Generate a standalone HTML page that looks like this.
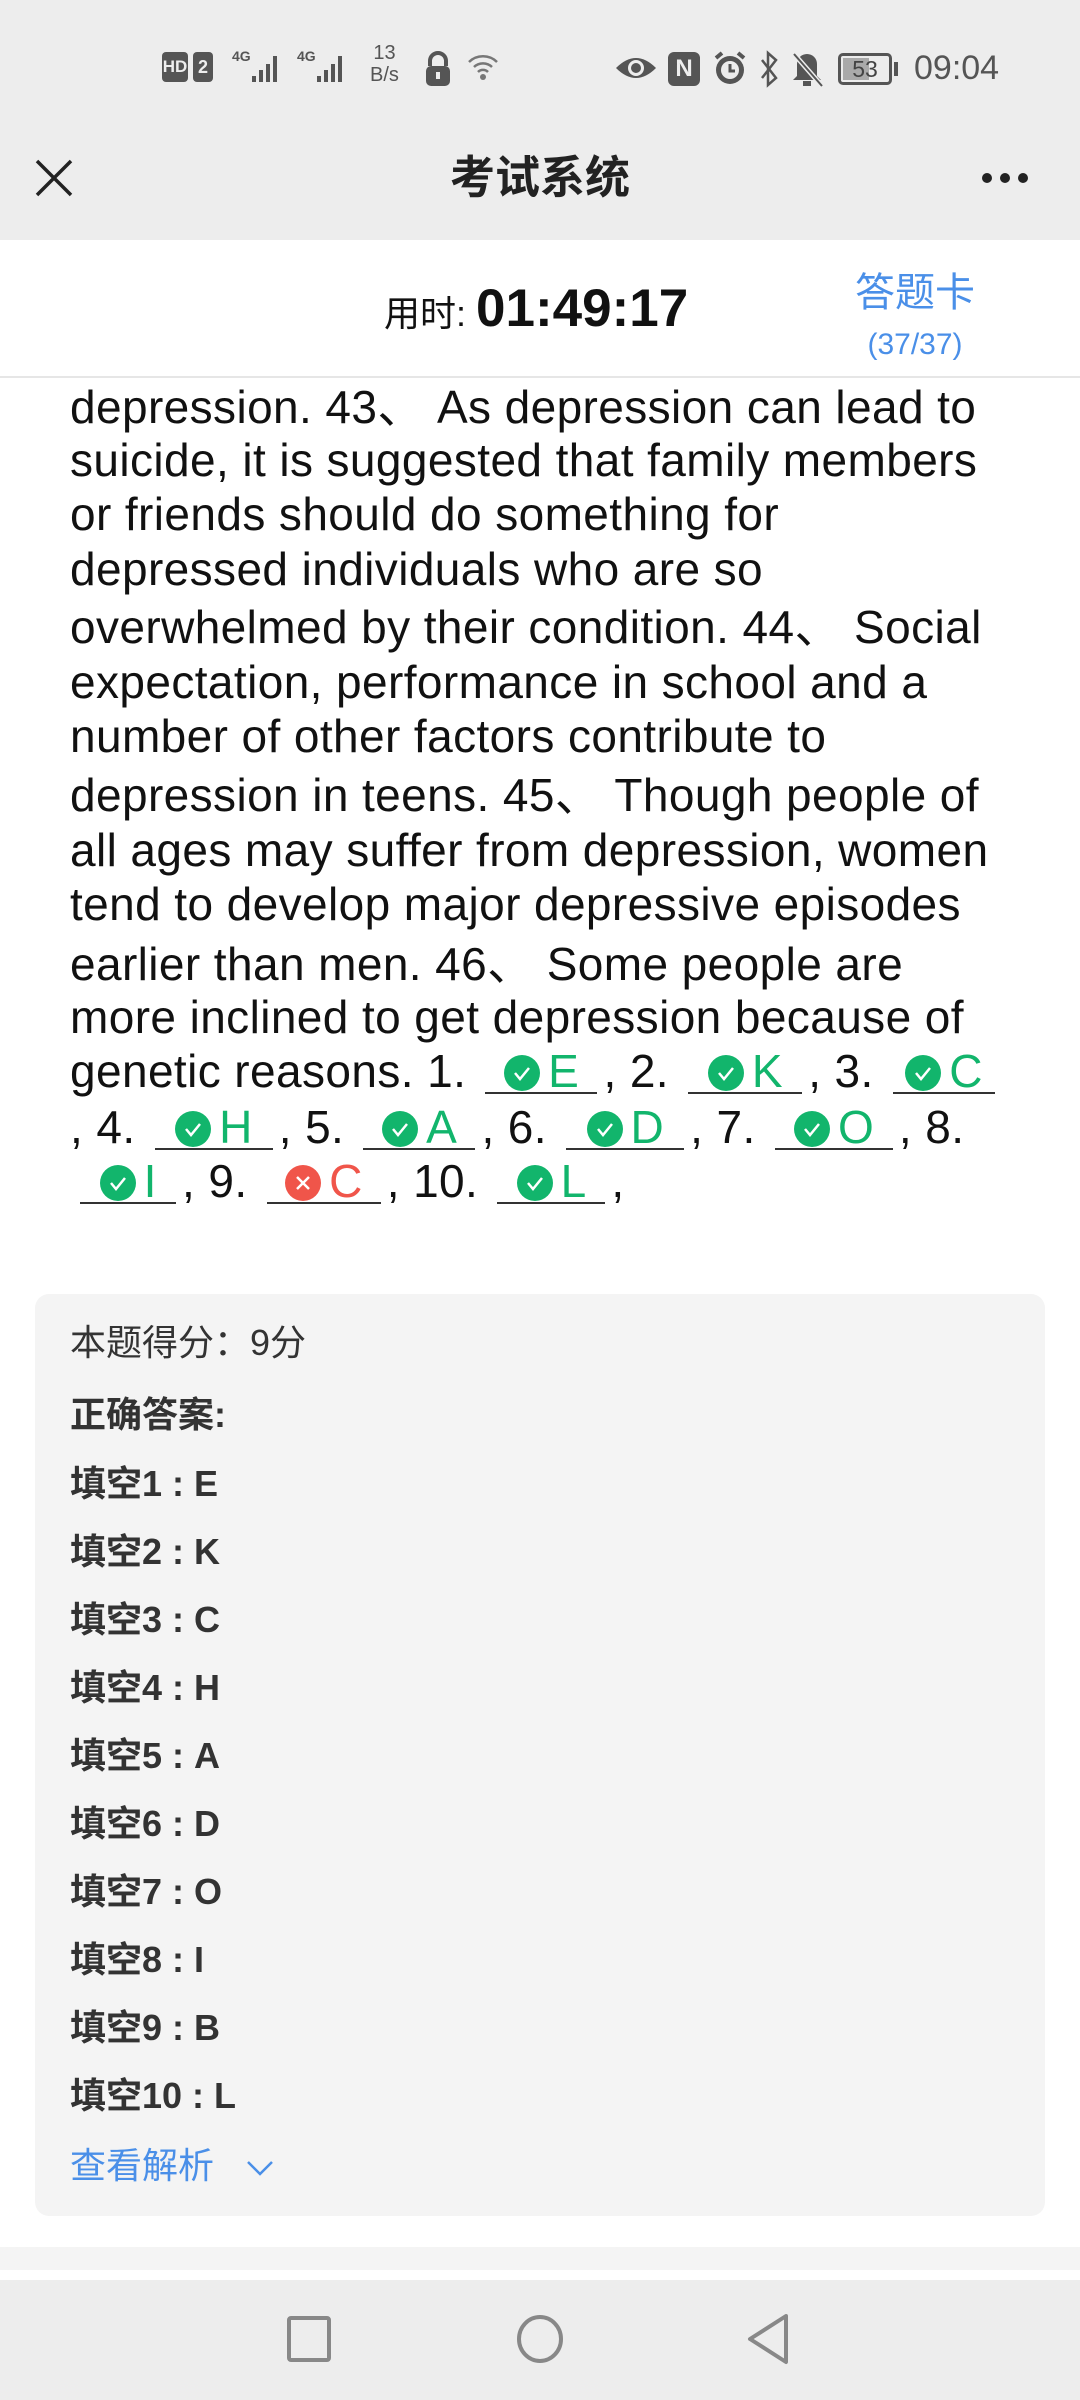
<!DOCTYPE html>
<html><head><meta charset="utf-8">
<style>
*{margin:0;padding:0;box-sizing:border-box}
body{width:1080px;height:2400px;position:relative;background:#fff;font-family:"Liberation Sans","Noto Sans CJK SC",sans-serif;overflow:hidden;color:#111}
.abs{position:absolute}
#top{left:0;top:0;width:1080px;height:240px;background:#ededed}
.hdr{left:0;top:240px;width:1080px;height:138px;background:#fff;border-bottom:2px solid #e6e6e6}
.ln{position:absolute;left:70px;font-size:46px;letter-spacing:0.4px;line-height:54px;white-space:nowrap;color:#111}
.b{display:inline-block;border-bottom:2px solid #333;text-align:center;height:50px;vertical-align:top;margin:0 6px;letter-spacing:0}
.ck{display:inline-block;width:36px;height:36px;border-radius:50%;background:#12b56c;vertical-align:-4px;position:relative;margin-right:8px}
.ck svg{position:absolute;left:0;top:0}
.g{color:#12b56c}.r{color:#f0554a}
.x{background:#f0554a}
.box{left:35px;top:1294px;width:1010px;height:922px;background:#f4f4f4;border-radius:14px}
.bl{position:absolute;left:70px;font-size:36px;color:#333;line-height:44px}
.bb{font-weight:bold}
</style></head><body>
<div id="top" class="abs"></div>
<!-- status bar -->
<div class="abs" style="left:162px;top:52px;width:26px;height:30px;background:#555;border-radius:4px;color:#eee;font-size:17px;font-weight:bold;line-height:30px;text-align:center">HD</div>
<div class="abs" style="left:193px;top:52px;width:20px;height:30px;background:#555;border-radius:4px;color:#eee;font-size:18px;font-weight:bold;line-height:30px;text-align:center">2</div>
<div class="abs" style="left:232px;top:48px;font-size:14px;font-weight:bold;color:#555">4G</div>
<svg class="abs" style="left:250px;top:52px" width="36" height="32"><g fill="#555"><rect x="2" y="24" width="4" height="6"/><rect x="9" y="18" width="4" height="12"/><rect x="16" y="12" width="4" height="18"/><rect x="23" y="4" width="4" height="26"/></g></svg>
<div class="abs" style="left:297px;top:48px;font-size:14px;font-weight:bold;color:#555">4G</div>
<svg class="abs" style="left:315px;top:52px" width="36" height="32"><g fill="#555"><rect x="2" y="24" width="4" height="6"/><rect x="9" y="18" width="4" height="12"/><rect x="16" y="12" width="4" height="18"/><rect x="23" y="4" width="4" height="26"/></g></svg>
<div class="abs" style="left:370px;top:42px;font-size:20px;color:#555;line-height:22px;text-align:center">13<br>B/s</div>
<svg class="abs" style="left:422px;top:50px" width="32" height="38"><path d="M8 16V11a8 8 0 0 1 16 0v5" stroke="#555" stroke-width="4" fill="none"/><rect x="4" y="16" width="24" height="20" rx="5" fill="#555"/><rect x="14" y="22" width="4" height="7" fill="#ededed"/></svg>
<svg class="abs" style="left:466px;top:52px" width="34" height="30"><path d="M3 10a20 20 0 0 1 28 0M8 15a13 13 0 0 1 18 0M12 20a7 7 0 0 1 10 0" stroke="#777" stroke-width="2.5" fill="none"/><circle cx="17" cy="25" r="3" fill="#777"/></svg>
<svg class="abs" style="left:614px;top:52px" width="44" height="32"><path d="M2 16Q22 -4 42 16Q22 36 2 16Z" fill="#555"/><circle cx="22" cy="16" r="8" fill="#ededed"/><circle cx="22" cy="16" r="5" fill="#555"/></svg>
<div class="abs" style="left:668px;top:52px;width:32px;height:34px;background:#555;border-radius:6px;color:#ededed;font-weight:bold;font-size:24px;text-align:center;line-height:34px">N</div>
<svg class="abs" style="left:712px;top:50px" width="36" height="38"><circle cx="18" cy="20" r="14" fill="#555"/><circle cx="18" cy="20" r="9" fill="#ededed"/><path d="M18 14v7h5" stroke="#555" stroke-width="3" fill="none"/><path d="M4 8l6-5M32 8l-6-5" stroke="#555" stroke-width="4"/></svg>
<svg class="abs" style="left:758px;top:50px" width="22" height="38"><path d="M4 10l14 18-8 7V3l8 7L4 28" stroke="#555" stroke-width="2.5" fill="none"/></svg>
<svg class="abs" style="left:790px;top:50px" width="34" height="38"><path d="M17 4a10 10 0 0 1 10 10v12l4 4H3l4-4V14A10 10 0 0 1 17 4Z" fill="#555"/><rect x="13" y="31" width="8" height="5" fill="#555"/><path d="M4 4l28 32" stroke="#ededed" stroke-width="5"/><path d="M4 4l28 32" stroke="#555" stroke-width="2"/></svg>
<div class="abs" style="left:838px;top:53px;width:54px;height:32px;border:3px solid #555;border-radius:5px"><div style="position:absolute;left:2px;top:2px;width:26px;height:22px;background:#aaa"></div><div style="position:absolute;left:0;top:0;width:48px;text-align:center;font-size:23px;line-height:26px;color:#444">53</div></div>
<div class="abs" style="left:894px;top:62px;width:4px;height:14px;background:#555"></div>
<div class="abs" style="left:914px;top:48px;font-size:34px;color:#555;line-height:40px">09:04</div>
<!-- nav -->
<svg class="abs" style="left:34px;top:158px" width="40" height="40"><path d="M3 3L37 37M37 3L3 37" stroke="#222" stroke-width="3.5"/></svg>
<div class="abs" style="left:0;width:1080px;top:148px;text-align:center;font-size:45px;font-weight:bold;color:#222;line-height:60px">考试系统</div>
<svg class="abs" style="left:980px;top:170px" width="50" height="16"><circle cx="7" cy="8" r="5" fill="#222"/><circle cx="25" cy="8" r="5" fill="#222"/><circle cx="43" cy="8" r="5" fill="#222"/></svg>
<div class="abs hdr"></div>
<div class="abs" style="left:384px;top:282px;font-size:36px;color:#111;line-height:54px">用时: <span style="font-size:53px;font-weight:bold">01:49:17</span></div>
<div class="abs" style="left:850px;top:268px;width:130px;text-align:center;font-size:40px;color:#4a8fe8;line-height:50px">答题卡</div>
<div class="abs" style="left:850px;top:326px;width:130px;text-align:center;font-size:30px;color:#4a8fe8;line-height:38px">(37/37)</div>
<!-- text -->
<div class="ln" style="top:380px">depression. 43、 As depression can lead to</div>
<div class="ln" style="top:433px">suicide, it is suggested that family members</div>
<div class="ln" style="top:487px">or friends should do something for</div>
<div class="ln" style="top:542px">depressed individuals who are so</div>
<div class="ln" style="top:600px">overwhelmed by their condition. 44、 Social</div>
<div class="ln" style="top:655px">expectation, performance in school and a</div>
<div class="ln" style="top:709px">number of other factors contribute to</div>
<div class="ln" style="top:768px">depression in teens. 45、 Though people of</div>
<div class="ln" style="top:823px">all ages may suffer from depression, women</div>
<div class="ln" style="top:877px">tend to develop major depressive episodes</div>
<div class="ln" style="top:937px">earlier than men. 46、 Some people are</div>
<div class="ln" style="top:990px">more inclined to get depression because of</div>
<svg width="0" height="0" style="position:absolute"><defs>
<symbol id="c" viewBox="0 0 36 36"><path d="M11 18l5 6 9-11" stroke="#fff" stroke-width="2.5" fill="none"/></symbol>
<symbol id="xx" viewBox="0 0 36 36"><path d="M12 12l12 12M24 12L12 24" stroke="#fff" stroke-width="2.5"/></symbol></defs></svg>
<div class="ln" style="top:1044px">genetic reasons. 1. <span class="b g" style="width:112px"><span class="ck"><svg width="36" height="36"><use href="#c"/></svg></span>E</span>, 2. <span class="b g" style="width:114px"><span class="ck"><svg width="36" height="36"><use href="#c"/></svg></span>K</span>, 3. <span class="b g" style="width:102px"><span class="ck"><svg width="36" height="36"><use href="#c"/></svg></span>C</span></div>
<div class="ln" style="top:1100px">, 4. <span class="b g" style="width:118px"><span class="ck"><svg width="36" height="36"><use href="#c"/></svg></span>H</span>, 5. <span class="b g" style="width:112px"><span class="ck"><svg width="36" height="36"><use href="#c"/></svg></span>A</span>, 6. <span class="b g" style="width:118px"><span class="ck"><svg width="36" height="36"><use href="#c"/></svg></span>D</span>, 7. <span class="b g" style="width:118px"><span class="ck"><svg width="36" height="36"><use href="#c"/></svg></span>O</span>, 8.</div>
<div class="ln" style="top:1154px"><span class="b g" style="width:96px;margin-left:10px"><span class="ck"><svg width="36" height="36"><use href="#c"/></svg></span>I</span>, 9. <span class="b r" style="width:114px"><span class="ck x"><svg width="36" height="36"><use href="#xx"/></svg></span>C</span>, 10. <span class="b g" style="width:108px"><span class="ck"><svg width="36" height="36"><use href="#c"/></svg></span>L</span>,</div>
<!-- answer box -->
<div class="abs box"></div>
<div class="bl" style="top:1321px">本题得分：9分</div>
<div class="bl bb" style="top:1393px">正确答案:</div>
<div class="bl bb" style="top:1462px">填空1 : E</div>
<div class="bl bb" style="top:1530px">填空2 : K</div>
<div class="bl bb" style="top:1598px">填空3 : C</div>
<div class="bl bb" style="top:1666px">填空4 : H</div>
<div class="bl bb" style="top:1734px">填空5 : A</div>
<div class="bl bb" style="top:1802px">填空6 : D</div>
<div class="bl bb" style="top:1870px">填空7 : O</div>
<div class="bl bb" style="top:1938px">填空8 : I</div>
<div class="bl bb" style="top:2006px">填空9 : B</div>
<div class="bl bb" style="top:2074px">填空10 : L</div>
<div class="bl" style="top:2144px;color:#4a8fe8">查看解析</div>
<svg class="abs" style="left:245px;top:2158px" width="30" height="20"><path d="M3 4l12 12L27 4" stroke="#4a8fe8" stroke-width="2.5" fill="none"/></svg>
<div class="abs" style="left:0;top:2247px;width:1080px;height:23px;background:#f4f4f4"></div>
<div class="abs" style="left:0;top:2280px;width:1080px;height:120px;background:#ededed"></div>
<svg class="abs" style="left:280px;top:2310px" width="520" height="60"><rect x="9" y="8" width="40" height="42" rx="2" stroke="#888" stroke-width="4" fill="none"/><ellipse cx="260" cy="29" rx="21" ry="22" stroke="#888" stroke-width="4" fill="none"/><path d="M506 6L470 29L506 52Z" stroke="#888" stroke-width="4" fill="none" stroke-linejoin="round"/></svg>
</body></html>
